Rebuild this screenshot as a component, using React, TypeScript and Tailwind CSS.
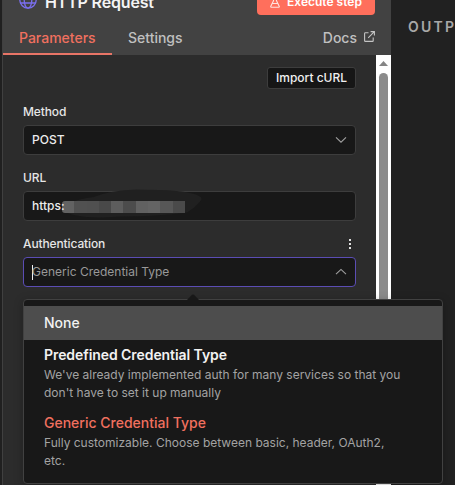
import type { ReactNode } from 'react';

const AUTH_OPTIONS = [
  {
    name: 'Predefined Credential Type',
    description: "We've already implemented auth for many services so that you don't have to set it up manually",
    selected: false,
  },
  {
    name: 'Generic Credential Type',
    description: 'Fully customizable. Choose between basic, header, OAuth2, etc.',
    selected: true,
  },
];

// greys of the redacted host name, one per 12px block
const REDACTED = [
  'bg-[#626262]',
  'bg-[#515151]',
  'bg-[#505050]',
  'bg-[#494949]',
  'bg-[#5d5d5d]',
  'bg-[#4c4c4c]',
  'bg-[#616161]',
  'bg-[#646464]',
  'bg-[#575757]',
  'bg-[#4a4a4a]',
];

function Chevron({ up = false }: { up?: boolean }) {
  return (
    <svg width="12" height="8" viewBox="0 0 12 8" fill="none" stroke="#a0a0a0" strokeWidth="1.1">
      <path d={up ? 'M1 6.2 6 1.4l5 4.8' : 'M1 1.4l5 4.8 5-4.8'} />
    </svg>
  );
}

function Label({ children }: { children: ReactNode }) {
  return <div className="h-4 text-[12px] leading-4 font-medium tracking-[-0.01em] text-[#e6e6e6]">{children}</div>;
}

function Header() {
  return (
    <header className="flex h-[55px] flex-col bg-[#424242]">
      <div className="flex h-[15px] items-end justify-between pr-[16px] pl-[16px]">
        <div className="flex h-[26px] items-center gap-[8px]">
          <svg width="18" height="18" viewBox="0 0 18 18" fill="none" stroke="#7b6ff0" strokeWidth="1.3" className="mb-[4px]">
            <circle cx="9" cy="9" r="8.2" />
            <ellipse cx="9" cy="9" rx="3.8" ry="8.2" />
            <path d="M1.5 6h15M1.5 12h15" />
          </svg>
          <span className="text-[16px] leading-[26px] font-semibold tracking-[-0.01em] text-[#f4f4f4]">HTTP Request</span>
        </div>
        <button className="flex h-[26px] w-[118px] shrink-0 items-center justify-center gap-[7px] rounded bg-[#ff6f5c] text-[12px] leading-[26px] font-semibold text-white">
          <svg width="10" height="12" viewBox="0 0 10 12" fill="none" stroke="#ffe4df" strokeWidth="1.1" strokeLinejoin="round">
            <path d="M2.5.7h5M3.5.7v4L.8 10.2q-.4 1.1.8 1.1h6.8q1.2 0 .8-1.1L6.5 4.7v-4M2.3 7.5h5.4" />
          </svg>
          Execute step
        </button>
      </div>
      <nav className="flex h-[40px] text-[14px] leading-[46px] font-medium">
        <span className="h-full w-[109px] border-b-2 border-[#e87567] pl-[16px] text-[#f0705f]">Parameters</span>
        <span className="pl-[16px] text-[#c0c0c0]">Settings</span>
        <span className="ml-auto flex items-center gap-[7px] pt-[5px] pr-[16px] text-[#c0c0c0]">
          <span className="leading-5">Docs</span>
          <svg width="11" height="11" viewBox="0 0 11 11" fill="none" stroke="#c4c4c4" strokeWidth="1.1" className="mb-[2px]">
            <path d="M4.5 1.7H1.3q-.7 0-.7.7v7.3q0 .7.7.7h7.2q.7 0 .7-.7V6.5M6.6.6h3.8v3.8M10.3.7 4.2 6.8" />
          </svg>
        </span>
      </nav>
    </header>
  );
}

function Scrollbar() {
  return (
    <div className="flex w-[15px] flex-col items-center bg-white pt-[6px]">
      <svg width="9" height="5" viewBox="0 0 9 5" fill="#858585">
        <path d="M4.5 0 9 5H0z" />
      </svg>
      <div className="mt-[7px] h-[390px] w-[9px] rounded-full bg-[#8b8b8b]" />
    </div>
  );
}

function AuthDropdown() {
  return (
    <div className="absolute top-[42px] left-0 h-[185px] w-[420px] rounded border border-[#414141] bg-[#181818] py-[6px] shadow-[0_2px_10px_rgba(0,0,0,0.25)]">
      <svg width="12" height="7" viewBox="0 0 12 7" className="absolute -top-[6px] left-[163px]">
        <path d="M0 6 5 .8q1-.8 2 0L12 6v1H0z" fill="#181818" />
      </svg>
      <div className="h-[34px] bg-[#4d4d4d] px-[20px] text-[14px] leading-[34px] font-medium text-[#f2f2f2]">None</div>
      {AUTH_OPTIONS.map((option) => (
        <div key={option.name} className="px-[20px] py-[6px]">
          <div
            className={
              option.selected
                ? 'text-[14px] leading-[18px] font-medium text-[#f0705f]'
                : 'text-[14px] leading-[18px] font-semibold tracking-[-0.005em] text-[#f2f2f2]'
            }
          >
            {option.name}
          </div>
          <div className="mt-[2px] w-[362px] text-[12px] leading-[18px] text-[#a3a3a3]">{option.description}</div>
        </div>
      ))}
    </div>
  );
}

export default function App() {
  return (
    <main className="flex h-[485px] w-[455px] overflow-hidden bg-[#212121] font-['Inter',sans-serif]">
      <div className="w-[2px] shrink-0 bg-[#202020]" />
      <section className="flex w-[389px] shrink-0 flex-col border-l border-[#404040] bg-[#2c2c2c]">
        <Header />
        <div className="flex h-[430px]">
          <div className="w-[373px] pt-[12px] pr-[20px] pl-[20px]">
            <button className="ml-auto flex h-[22px] w-[89px] items-center justify-center rounded-[3px] border border-[#3d3d3d] bg-[#161616] text-[12px] font-medium text-[#f0f0f0]">
              Import cURL
            </button>

            <div className="mt-[15px]">
              <Label>Method</Label>
              <div className="mt-[5px] flex h-[30px] items-center justify-between rounded border border-[#3d3d3d] bg-[#181818] pr-[8px] pl-[8px] text-[12px] font-medium text-[#ececec]">
                POST
                <Chevron />
              </div>
            </div>

            <div className="mt-[15px]">
              <Label>URL</Label>
              <div className="relative mt-[5px] flex h-[30px] items-center rounded border border-[#3d3d3d] bg-[#181818] pl-[8px] text-[12px] font-medium text-[#ececec]">
                {/* brush smear around the hidden host */}
                <svg width="150" height="32" viewBox="0 0 150 32" className="absolute -top-[4px] left-[32px]">
                  <path d="M6 22Q8 13 38 9 55 2 80 1.500q50 0 62 6 6 2 2 6-6 7-13 11-30 4-68 4Q20 32 6 22z" fill="#202020" />
                </svg>
                <div className="relative mt-[2px] ml-[30px] flex h-[12px] overflow-hidden rounded-l-[3px]">
                  {REDACTED.map((tone, i) => (
                    <span key={i} className={`h-full w-[12.3px] ${tone}`} />
                  ))}
                </div>
                <span className="absolute left-[8px]">https:</span>
              </div>
            </div>

            <div className="mt-[15px]">
              <div className="flex items-center justify-between pr-[4px]">
                <Label>Authentication</Label>
                <svg width="3" height="10" viewBox="0 0 3 10" fill="#e0e0e0">
                  <path d="M0 0h2v2h-2zM0 4h2v2h-2zM0 8h2v2h-2z" />
                </svg>
              </div>
              <div className="relative mt-[5px] flex h-[30px] items-center justify-between rounded border border-[#5b4db4] bg-[#181818] pr-[8px] pl-[8px] text-[12px] text-[#999999]">
                <span className="flex items-center">
                  <span className="mt-px h-[15px] w-px bg-[#f0f0f0]" />
                  <span className="-ml-px">Generic Credential Type</span>
                </span>
                <Chevron up />
                <div className="absolute -top-px -left-px">
                  <AuthDropdown />
                </div>
              </div>
            </div>
          </div>
          <Scrollbar />
        </div>
      </section>
      <aside className="min-w-0 flex-1 overflow-hidden pt-[17px] pl-[17px] text-[14px] leading-5 font-semibold tracking-[2.2px] whitespace-nowrap text-[#a8a8a8]">
        OUTP
      </aside>
    </main>
  );
}
